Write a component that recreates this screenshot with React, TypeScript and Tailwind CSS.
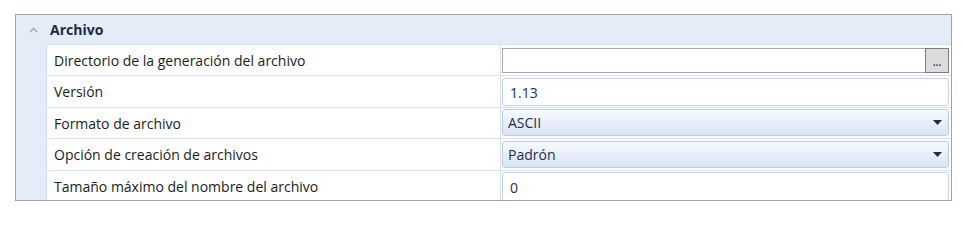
import React from "react";

const font = { fontFamily: '"Open Sans", "Noto Sans", sans-serif' };

function Row({ h, label, children }: { h: string; label: string; children: React.ReactNode }) {
  return (
    <div className={`flex border-t border-[#d6e2f3] ${h}`}>
      <div className="w-[454px] shrink-0 flex items-center pl-[7px] bg-white border-r border-[#d6e2f3] text-[14px] text-[#1b1b1b]">
        {label}
      </div>
      <div className="flex-1 bg-white pl-[1px] pr-[2px] flex flex-col">{children}</div>
    </div>
  );
}

export default function App() {
  return (
    <div className="w-[963px] h-[213px] bg-white pt-[14px] pl-[15px]" style={font}>
      <div className="w-[937px] h-[187px] border border-[#a3a3a3] bg-[#e4ecf8] flex flex-col overflow-hidden">
        <div className="h-[29px] shrink-0 flex items-center">
          <svg width="9" height="6" viewBox="0 0 9 6" className="ml-[13px] mt-[1px]">
            <polyline points="1,5 4.5,1.5 8,5" fill="none" stroke="#9db2cc" strokeWidth="1.6" />
          </svg>
          <span className="ml-[12px] text-[14px] font-bold text-[#1d2a45]">Archivo</span>
        </div>
        <div className="ml-[30px] flex-1 border-l border-[#d6e2f3] bg-white flex flex-col">
          <Row h="h-[31px]" label="Directorio de la generación del archivo">
            <div className="mt-[3px] h-[25px] flex border border-[#a9a9a9] bg-white">
              <div className="flex-1" />
              <div className="w-[24px] -my-[1px] -mr-[1px] border border-[#7c7c7c] bg-[#dcdcdc] flex items-end justify-center pb-[5px]">
                <span className="text-[10px] leading-none text-[#2a3b5c] font-bold">...</span>
              </div>
            </div>
          </Row>
          <Row h="h-[32px]" label="Versión">
            <div className="mt-[2px] h-[28px] rounded-[3px] border border-[#c4d3e8] bg-white flex items-center pl-[7px] text-[14px] text-[#1e2f4e]">
              1.13
            </div>
          </Row>
          <Row h="h-[31px]" label="Formato de archivo">
            <div className="mt-[1px] h-[27px] rounded-[3px] border border-[#bccde3] bg-gradient-to-b from-[#f7f9fd] to-[#d9e5f4] flex items-center pl-[5px] pr-[6px] text-[14px] text-[#1e2f4e]">
              <span className="flex-1">ASCII</span>
              <svg width="9" height="5" viewBox="0 0 9 5"><path d="M0 0 H9 L4.5 5 Z" fill="#1e2a44" /></svg>
            </div>
          </Row>
          <Row h="h-[32px]" label="Opción de creación de archivos">
            <div className="mt-[2px] h-[27px] rounded-[3px] border border-[#bccde3] bg-gradient-to-b from-[#f7f9fd] to-[#d9e5f4] flex items-center pl-[5px] pr-[6px] text-[14px] text-[#1e2f4e]">
              <span className="flex-1">Padrón</span>
              <svg width="9" height="5" viewBox="0 0 9 5"><path d="M0 0 H9 L4.5 5 Z" fill="#1e2a44" /></svg>
            </div>
          </Row>
          <Row h="flex-1" label="Tamaño máximo del nombre del archivo">
            <div className="mt-[1px] h-[30px] rounded-[3px] border border-[#c4d3e8] bg-white flex items-center pl-[7px] text-[14px] text-[#1e2f4e]">
              0
            </div>
          </Row>
        </div>
      </div>
    </div>
  );
}
